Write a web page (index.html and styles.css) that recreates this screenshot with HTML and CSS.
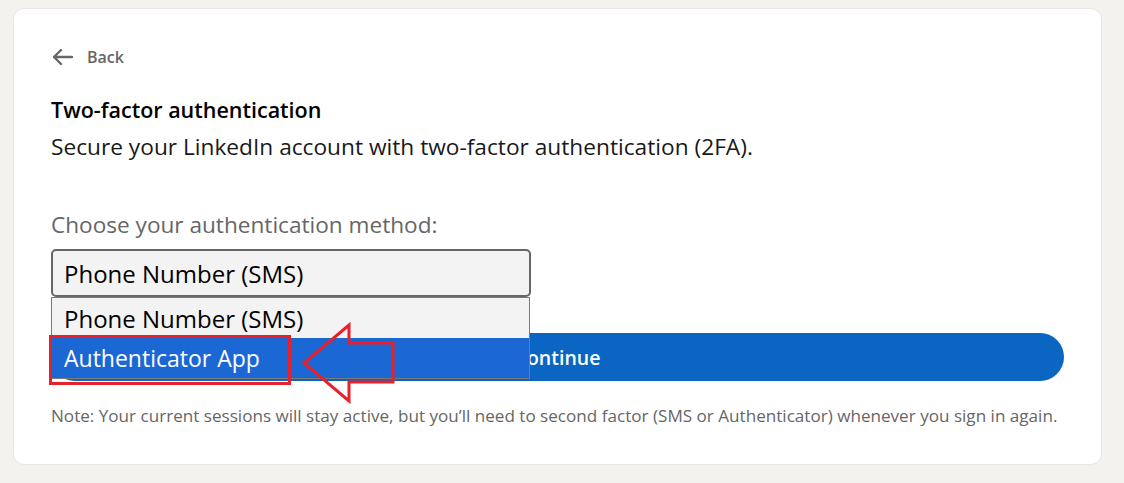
FILE: index.html
```html
<!DOCTYPE html>
<html lang="en">
<head>
<meta charset="utf-8">
<title>Two-factor authentication</title>
<link rel="stylesheet" href="styles.css">
</head>
<body>
<main class="card">
  <a class="back" href="#">
    <svg class="back-icon" width="22" height="18" viewBox="0 0 22 18" aria-hidden="true">
      <path d="M21 9H3M10 2L3 9l7 7" fill="none" stroke="#666" stroke-width="2.4" stroke-linecap="round" stroke-linejoin="round"/>
    </svg>
    <span>Back</span>
  </a>
  <h1 class="title">Two-factor authentication</h1>
  <p class="subtitle">Secure your LinkedIn account with two-factor authentication (2FA).</p>
  <div class="label">Choose your authentication method:</div>
  <div class="select-wrap">
    <div class="select">Phone Number (SMS)</div>
    <ul class="listbox">
      <li class="option">Phone Number (SMS)</li>
      <li class="option option-active">Authenticator App</li>
    </ul>
    <div class="annot-box"></div>
    <svg class="annot-arrow" width="96" height="82" viewBox="0 0 96 82" aria-hidden="true">
      <polygon points="3,41 48,3 48,21 92,21 92,60 48,60 48,79" fill="none" stroke="#e8202a" stroke-width="3" stroke-linejoin="miter"/>
    </svg>
  </div>
  <button class="continue" type="button">Continue</button>
  <p class="note">Note: Your current sessions will stay active, but you’ll need to second factor (SMS or Authenticator) whenever you sign in again.</p>
</main>
</body>
</html>
```
FILE: styles.css
```css
* { box-sizing: border-box; }
html, body { margin: 0; padding: 0; }
body {
  background: #f3f2ef;
  font-family: "Open Sans", "Noto Sans", sans-serif;
  color: #191919;
  padding: 9px 23px 19px 14px;
}
.card {
  background: #fff;
  border-radius: 10px;
  box-shadow: 0 0 0 1px rgba(0,0,0,0.04);
  height: 455px;
  padding: 36px 37px 0 37px;
}
.back {
  display: flex;
  align-items: center;
  gap: 14px;
  height: 24px;
  color: #666;
  text-decoration: none;
  font-weight: 600;
  font-size: 16px;
}
.back-icon { display: block; }
.title {
  margin: 27px 0 0;
  font-size: 21.5px;
  line-height: 28px;
  font-weight: 600;
  color: #000;
}
.subtitle {
  margin: 9px 0 0;
  font-size: 22.7px;
  line-height: 28px;
  color: #191919;
}
.label {
  margin-top: 50px;
  font-size: 22.6px;
  line-height: 28px;
  color: #666;
}
.select-wrap {
  position: relative;
  margin-top: 10px;
  width: 480px;
}
.select {
  height: 48px;
  border: 2px solid #666;
  border-radius: 5px;
  background: #f3f3f3;
  padding: 1px 11px 0;
  display: flex;
  align-items: center;
  font-size: 24px;
  color: #000;
}
.listbox {
  position: absolute;
  left: 0;
  top: 48px;
  width: 479px;
  margin: 0;
  padding: 0;
  list-style: none;
  border: 1px solid #7a7a7a;
  background: #f3f3f3;
  z-index: 2;
}
.option {
  height: 40px;
  display: flex;
  align-items: center;
  padding: 0 12px;
  font-size: 24px;
  color: #000;
}
.option-active {
  background: #1b67d4;
  color: #fff;
  font-size: 23px;
}
.annot-box {
  position: absolute;
  left: -2px;
  top: 86px;
  width: 242px;
  height: 50px;
  border: 3px solid #e8202a;
  z-index: 3;
}
.annot-arrow {
  position: absolute;
  left: 250px;
  top: 73px;
  z-index: 3;
}
.continue {
  display: block;
  width: 100%;
  height: 48px;
  margin-top: 36px;
  border: 0;
  border-radius: 24px;
  background: #0a66c2;
  color: #fff;
  font-family: inherit;
  font-size: 19.5px;
  font-weight: 600;
}
.note {
  margin: 24px 0 0;
  font-size: 17.1px;
  line-height: 22px;
  color: #666;
}
```
